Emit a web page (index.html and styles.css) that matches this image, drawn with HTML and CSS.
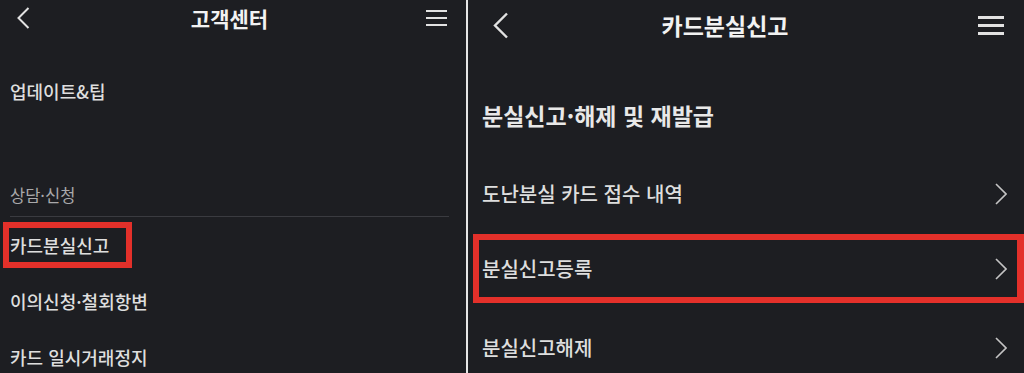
FILE: index.html
```html
<!DOCTYPE html>
<html lang="ko">
    <head>
        <meta charset="utf-8">
        <title>카드분실신고</title>
        <link rel="stylesheet" href="styles.css">
    </head>

    <body>
        <div class="screens">
            <section class="panel panel-left">
                <header class="bar bar-left">
                    <svg class="back" width="16" height="22" viewBox="0 0 16 22"><polyline points="11.5,1 1.5,11 11.5,21"/></svg>
                    <h1 class="bar-title">고객센터</h1>
                    <svg class="menu" width="21" height="16" viewBox="0 0 21 16"><path d="M0 1H21M0 8H21M0 15H21"/></svg>
                </header>

                <div class="menu-item top-item">업데이트&amp;팁</div>

                <div class="group-label">상담·신청</div>
                <ul class="menu-list">
                    <li class="menu-item"><span class="highlight">카드분실신고</span></li>
                    <li class="menu-item">이의신청·철회항변</li>
                    <li class="menu-item">카드 일시거래정지</li>
                </ul>
            </section>

            <div class="separator"></div>

            <section class="panel panel-right">
                <header class="bar bar-right">
                    <svg class="back" width="16" height="27" viewBox="0 0 16 27"><polyline points="14,1.5 2,13.5 14,25.5"/></svg>
                    <h1 class="bar-title">카드분실신고</h1>
                    <svg class="menu" width="26" height="19" viewBox="0 0 26 19"><path d="M0 1.5H26M0 9.5H26M0 17.5H26"/></svg>
                </header>

                <h2 class="section-title">분실신고·해제 및 재발급</h2>

                <ul class="link-list">
                    <li class="link-row">
                        <span>도난분실 카드 접수 내역</span>
                        <svg class="chevron" width="12" height="22" viewBox="0 0 12 22"><polyline points="1,1 11,11 1,21"/></svg>
                    </li>
                    <li class="link-row link-row-marked">
                        <div class="marked-box">
                            <span>분실신고등록</span>
                            <svg class="chevron" width="12" height="22" viewBox="0 0 12 22"><polyline points="1,1 11,11 1,21"/></svg>
                        </div>
                    </li>
                    <li class="link-row">
                        <span>분실신고해제</span>
                        <svg class="chevron" width="12" height="22" viewBox="0 0 12 22"><polyline points="1,1 11,11 1,21"/></svg>
                    </li>
                </ul>
            </section>
        </div>
    </body>
</html>
```

FILE: styles.css
```css
html, body {
    margin: 0;
    height: 100%;
    background: #1d1e22;
}

body {
    font-family: "Noto Sans CJK KR", "Noto Sans", sans-serif;
    color: #dedede;
    overflow: hidden;
}

ul {
    list-style: none;
    margin: 0;
    padding: 0;
}

h1, h2 {
    margin: 0;
}

.screens {
    display: flex;
    height: 373px;
}

.panel {
    background: #1d1e22;
    overflow: hidden;
}

.panel-left {
    width: 466px;
    flex: none;
}

.separator {
    width: 2px;
    flex: none;
    background: #e6e6e6;
}

.panel-right {
    flex: 1;
}

/* header bars */

.bar {
    display: flex;
    align-items: center;
}

.bar svg {
    flex: none;
    fill: none;
    stroke: #e2e2e2;
}

.bar-title {
    flex: 1;
    text-align: center;
    font-weight: 700;
    color: #f2f2f2;
}

.bar-left {
    height: 36px;
    padding: 0 19px 0 17px;
}

.bar-left .back {
    stroke-width: 2;
}

.bar-left .menu {
    stroke-width: 2;
}

.bar-left .bar-title {
    font-size: 21px;
    line-height: 26px;
}

.bar-right {
    height: 50px;
    padding: 0 20px 0 25px;
}

.bar-right .back {
    stroke-width: 2.4;
}

.bar-right .menu {
    stroke-width: 3;
    margin-left: 37px;
}

.bar-right .bar-title {
    font-size: 23px;
    line-height: 30px;
}

/* left list */

.menu-item {
    display: flex;
    align-items: center;
    height: 56px;
    padding-left: 10px;
    font-size: 18px;
    font-weight: 500;
}

.top-item {
    margin-top: 27px;
}

.group-label {
    margin-top: 61px;
    height: 30px;
    line-height: 30px;
    padding-left: 10px;
    font-size: 16.5px;
    color: #a9a9ab;
}

.menu-list {
    margin: 6px 17px 0 10px;
    border-top: 1px solid #3a3b40;
}

.menu-list .menu-item {
    margin-left: -10px;
}

.highlight {
    display: inline-block;
    margin-left: -7px;
    padding: 0 17px 0 1px;
    line-height: 34px;
    border: 6px solid #e3302a;
}

/* right list */

.section-title {
    margin-top: 50px;
    height: 30px;
    line-height: 30px;
    padding-left: 14px;
    font-size: 23px;
    font-weight: 700;
    color: #e8e8e8;
}

.link-list {
    margin-top: 25px;
}

.link-row {
    display: flex;
    align-items: center;
    height: 77px;
    padding: 0 17px 0 14px;
    font-size: 20px;
    font-weight: 500;
}

.link-row-marked {
    box-sizing: border-box;
    align-items: flex-start;
    padding: 2px 0 0 5px;
}

.marked-box {
    flex: 1;
    display: flex;
    align-items: center;
    box-sizing: border-box;
    height: 69px;
    padding: 0 10px 0 3px;
    border: 6px solid #e3302a;
    border-right-width: 7px;
}

.chevron {
    flex: none;
    margin-left: auto;
    fill: none;
    stroke: #c4c4c4;
    stroke-width: 1.6;
}
```
